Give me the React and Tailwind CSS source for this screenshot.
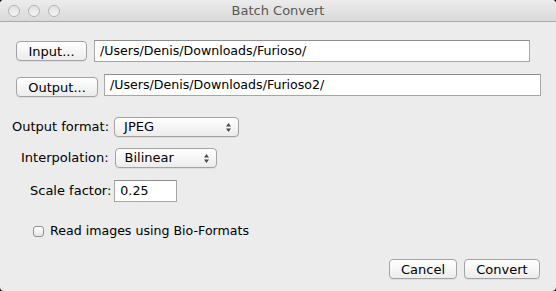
import React from 'react';

const FONT = { fontFamily: '"DejaVu Sans", "Liberation Sans", sans-serif' };

function Light() {
    return <span className="block w-[12px] h-[12px] rounded-full border border-[#b4b4b4] bg-gradient-to-b from-[#e2e2e2] to-[#f4f4f4]"></span>;
}

function AquaButton({ children, className = '' }) {
    return (
        <button
            type="button"
            className={`h-[20px] rounded-[4px] border border-[#a3a3a3] bg-gradient-to-b from-[#ffffff] to-[#ececec] text-[13px] leading-none text-black shadow-[0_1px_0_rgba(0,0,0,0.06)] flex items-center justify-center ${className}`}
        >
            {children}
        </button>
    );
}

function Field({ value, className = '' }) {
    return (
        <div className={`h-[22px] bg-white border border-[#a6a6a6] border-t-[#8e8e8e] flex items-center pl-[5px] text-[12.6px] text-black ${className}`}>
            {value}
        </div>
    );
}

function Popup({ value, className = '' }) {
    return (
        <div className={`h-[20px] rounded-[4px] border border-[#a3a3a3] bg-gradient-to-b from-[#ffffff] to-[#ececec] shadow-[0_1px_0_rgba(0,0,0,0.06)] flex items-center justify-between pl-[9px] pr-[6px] text-[13px] text-black ${className}`}>
            <span>{value}</span>
            <svg width="7" height="11" viewBox="0 0 7 11">
                <path d="M3.5 1 L6 4.5 L1 4.5 Z" fill="#4a4a4a" />
                <path d="M3.5 10 L6 6.5 L1 6.5 Z" fill="#4a4a4a" />
            </svg>
        </div>
    );
}

export default function App() {
    return (
        <div className="w-[556px] h-[291px] bg-black" style={FONT}>
            <div className="w-full h-full rounded-[4px] overflow-hidden bg-[#ececec] flex flex-col">
                {/* title bar */}
                <div className="relative h-[22px] shrink-0 bg-gradient-to-b from-[#ececec] to-[#d9d9d9] border-b border-[#a9a9a9] flex items-center">
                    <div className="flex gap-[8px] pl-[8px]">
                        <Light />
                        <Light />
                        <Light />
                    </div>
                    <div className="absolute inset-0 flex items-center justify-center text-[13px] text-[#575757]">Batch Convert</div>
                </div>

                <div className="flex flex-col">
                    <div className="mt-[18px] flex items-center pl-[16px]">
                        <AquaButton className="w-[71px]">Input...</AquaButton>
                        <Field className="ml-[7px] w-[436px]" value="/Users/Denis/Downloads/Furioso/" />
                    </div>

                    <div className="mt-[11px] flex items-center pl-[16px]">
                        <AquaButton className="w-[82px] mt-[4px]">Output...</AquaButton>
                        <Field className="ml-[6px] w-[437px]" value="/Users/Denis/Downloads/Furioso2/" />
                    </div>

                    <div className="mt-[20px] flex items-center pl-[12px]">
                        <span className="text-[13px] text-black">Output format:</span>
                        <Popup className="ml-[5px] w-[125px]" value="JPEG" />
                    </div>

                    <div className="mt-[11px] flex items-center pl-[21px]">
                        <span className="text-[13px] text-black">Interpolation:</span>
                        <Popup className="ml-[6px] w-[102px]" value="Bilinear" />
                    </div>

                    <div className="mt-[12px] flex items-center pl-[30px]">
                        <span className="text-[13px] text-black">Scale factor:</span>
                        <Field className="ml-[3px] w-[63px] pl-[3px]" value="0.25" />
                    </div>

                    <div className="mt-[21px] h-[16px] flex items-center pl-[33px]">
                        <span className="w-[11px] h-[11px] rounded-[3px] border border-[#8f8f8f] bg-gradient-to-b from-[#ffffff] to-[#e6e6e6]"></span>
                        <span className="ml-[6px] text-[12.6px] text-black">Read images using Bio-Formats</span>
                    </div>

                    <div className="mt-[20px] flex justify-end gap-[7px] pr-[16px]">
                        <AquaButton className="w-[68px]">Cancel</AquaButton>
                        <AquaButton className="w-[76px]">Convert</AquaButton>
                    </div>
                </div>
            </div>
        </div>
    );
}
